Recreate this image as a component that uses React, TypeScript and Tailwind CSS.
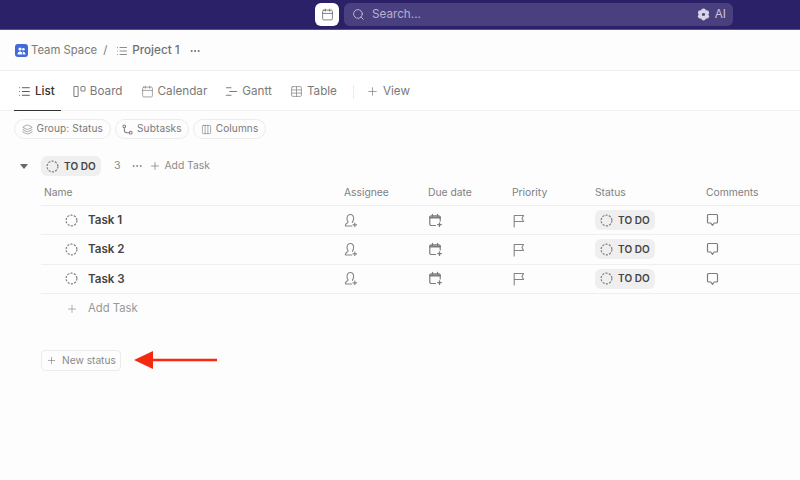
import { Columns3, Ellipsis, Layers, List, Plus, Search, Table, Calendar } from 'lucide-react';

const tasks = ['Task 1', 'Task 2', 'Task 3'];
const gridCols = 'grid grid-cols-[300px_84px_84px_83px_111px_1fr]';

function DashedCircle({ size = 13 }: { size?: number }) {
    return (
        <svg width={size} height={size} viewBox="0 0 14 14" fill="none" className="shrink-0">
            <circle cx="7" cy="7" r="5.8" stroke="#808080" strokeWidth="1.3" strokeDasharray="2.3 1.35" />
        </svg>
    );
}

function BoardIcon() {
    return (
        <svg width="13" height="13" viewBox="0 0 14 14" fill="none" stroke="#7d7d7d" strokeWidth="1.1" className="shrink-0">
            <rect x="1" y="1.5" width="4.5" height="11" rx="1" />
            <rect x="8.5" y="1.5" width="4.5" height="5" rx="1.5" />
        </svg>
    );
}

function GanttIcon() {
    return (
        <svg width="13" height="13" viewBox="0 0 14 14" fill="none" stroke="#7d7d7d" strokeWidth="1.2" strokeLinecap="round" className="shrink-0">
            <path d="M1.5 3h5M5 7h7.5M1.5 11h5" />
        </svg>
    );
}

function SubtasksIcon() {
    return (
        <svg width="11" height="11" viewBox="0 0 12 12" fill="none" stroke="#7d7d7d" strokeWidth="1.1" className="shrink-0">
            <circle cx="2.5" cy="2.5" r="1.5" />
            <circle cx="9.5" cy="9.5" r="1.5" />
            <path d="M2.5 4v2.5c0 2 1.2 3 3 3H8" />
        </svg>
    );
}

function AssigneeIcon() {
    return (
        <svg width="14" height="15" viewBox="0 0 14 15" fill="none" stroke="#858585" strokeWidth="1.1" strokeLinecap="round" strokeLinejoin="round" className="shrink-0">
            <path d="M7.7 13H2.2c-.6 0-1-.5-.8-1 .4-1.3 1.3-2 2.5-2.6.3-.2.3-.6.1-.8C3.3 7.9 3 7 3 5.6 3 3.3 4.4 1.5 6.3 1.5s3.300 1.8 3.300 4.1c0 1.4-.3 2.300-1 3-.2.2-.2.5 0 .7" />
            <path d="M10.8 10v3.600M9 11.800h3.600" strokeWidth="1.2" />
        </svg>
    );
}

function DueDateIcon() {
    return (
        <svg width="15" height="15" viewBox="0 0 15 15" fill="none" stroke="#7c7c7c" strokeLinecap="round" strokeLinejoin="round" className="shrink-0">
            <path d="M7.5 12.5H3.200c-.8 0-1.400-.6-1.400-1.400V4.300c0-.8.6-1.400 1.400-1.400h7.600c.8 0 1.400.6 1.400 1.400v3.700" strokeWidth="1.2" />
            <path d="M2 4.600h10" strokeWidth="2" />
            <path d="M4.500 1.300v2.200M9.500 1.300v2.200" strokeWidth="1.2" />
            <path d="M11.500 9.800v3.600M9.700 11.600h3.600" strokeWidth="1.3" />
        </svg>
    );
}

function FlagIcon() {
    return (
        <svg width="14" height="15" viewBox="0 0 14 15" fill="none" stroke="#858585" strokeWidth="1.1" strokeLinecap="round" strokeLinejoin="round" className="shrink-0">
            <path d="M2.200 14V2.500H11.500L10 5.500l1.500 3H2.200" />
        </svg>
    );
}

function CommentIcon() {
    return (
        <svg width="13" height="14" viewBox="0 0 13 14" fill="none" stroke="#7c7c7c" strokeWidth="1.2" strokeLinejoin="round" className="shrink-0">
            <path d="M2.500 1.500h8c.6 0 1 .4 1 1v6.500c0 .6-.4 1-1 1H8.200L6.500 12.300 4.800 10H2.500c-.6 0-1-.4-1-1V2.500c0-.6.4-1 1-1Z" />
        </svg>
    );
}

function Tab({ icon, label, active }: { icon: React.ReactNode; label: string; active?: boolean }) {
    return (
        <div className={`relative flex h-full items-center gap-1 pt-[2px] text-[11.7px] ${active ? 'font-medium text-[#333]' : 'text-[#7a7a7a]'}`}>
            {icon}
            <span>{label}</span>
            {active && <div className="absolute right-[-6px] bottom-[-1px] left-[-4px] h-[1.5px] bg-[#333]" />}
        </div>
    );
}

function Chip({ icon, label }: { icon: React.ReactNode; label: string }) {
    return (
        <div className="flex h-5 items-center gap-1 rounded-full border border-[#ececec] px-[6.5px] text-[10.1px] tracking-[0.1px] text-[#7a7a7a]">
            {icon}
            <span>{label}</span>
        </div>
    );
}

function StatusBadge() {
    return (
        <div className="flex h-5 w-[60px] items-center gap-[5px] rounded-md bg-[#efefef] px-[5px] text-[10px] font-semibold tracking-[0.1px] whitespace-nowrap text-[#444]">
            <DashedCircle />
            <span>TO DO</span>
        </div>
    );
}

export default function App() {
    return (
        <div className="flex h-[480px] w-[800px] flex-col overflow-hidden bg-[#fdfdfd] font-['Inter',sans-serif]">
            <header className="flex h-[30px] shrink-0 items-center border-b border-[#5a5290] bg-[#2b2169] pl-[315px]">
                <div className="flex h-[23px] w-[24px] items-center justify-center rounded-md bg-white">
                    <Calendar size={13} strokeWidth={1.5} color="#666" />
                </div>
                <div className="ml-[5px] flex h-[23px] w-[389px] items-center rounded-md bg-[#4a4080] pr-[7px] pl-[8px] text-[11.7px] text-[#b5b0d0]">
                    <Search size={13} strokeWidth={1.6} color="#c9c6dd" />
                    <span className="ml-[7px] flex-1">Search...</span>
                    <svg width="13" height="13" viewBox="0 0 14 14" fill="#d8d6e6" className="shrink-0">
                        <circle cx="7" cy="3.2" r="2.6" />
                        <circle cx="7" cy="10.8" r="2.6" />
                        <circle cx="3.6" cy="5" r="2.6" />
                        <circle cx="10.4" cy="5" r="2.6" />
                        <circle cx="3.6" cy="9" r="2.6" />
                        <circle cx="10.4" cy="9" r="2.6" />
                        <circle cx="7" cy="7" r="1.4" fill="#4a4080" />
                    </svg>
                    <span className="ml-[5px] text-[#c9c6dd]">AI</span>
                </div>
            </header>

            <div className="flex h-[41px] shrink-0 items-center border-b border-[#f1f1f1] pt-[1px] pl-[15px] text-[11.3px] text-[#7a7a7a]">
                <div className="flex h-[13px] w-[13px] items-center justify-center rounded-[3px] bg-[#4169d8]">
                    <svg width="9" height="8" viewBox="0 0 9 8" fill="white">
                        <circle cx="3" cy="2" r="1.6" />
                        <circle cx="6.4" cy="2.2" r="1.3" />
                        <path d="M0.5 7.5c0-2 1-3 2.5-3s2.5 1 2.500 3zM6.200 7.500c0-1.200-.2-2-.7-2.800 1.700-.3 3 .8 3 2.800z" />
                    </svg>
                </div>
                <span className="ml-[3px]">Team Space</span>
                <span className="ml-[6px]">/</span>
                <List size={12} strokeWidth={1.5} color="#666" className="ml-[9px]" />
                <span className="ml-1 text-[11.7px] font-medium text-[#6f6f6f]">Project 1</span>
                <Ellipsis size={12} color="#666" className="ml-[9px]" />
            </div>

            <div className="flex h-[40px] shrink-0 items-center gap-[18px] border-b border-[#f0f0f0] bg-white pl-[18px]">
                <Tab active label="List" icon={<List size={13} strokeWidth={1.6} color="#444" />} />
                <Tab label="Board" icon={<BoardIcon />} />
                <Tab label="Calendar" icon={<Calendar size={13} strokeWidth={1.3} color="#7d7d7d" />} />
                <Tab label="Gantt" icon={<GanttIcon />} />
                <Tab label="Table" icon={<Table size={13} strokeWidth={1.3} color="#7d7d7d" />} />
                <div className="-ml-[2px] mt-[2px] h-[14px] w-px bg-[#ececec]" />
                <div className="-ml-[6px] flex items-center gap-1 pt-[2px] text-[11.7px] text-[#7a7a7a]">
                    <Plus size={13} strokeWidth={1.3} color="#7d7d7d" />
                    <span>View</span>
                </div>
            </div>

            <div className="flex h-[36px] shrink-0 items-center gap-1 pl-[14px]">
                <Chip label="Group: Status" icon={<Layers size={11} strokeWidth={1.4} color="#7d7d7d" />} />
                <Chip label="Subtasks" icon={<SubtasksIcon />} />
                <Chip label="Columns" icon={<Columns3 size={11} strokeWidth={1.4} color="#7d7d7d" />} />
            </div>

            <div className="mt-[9px] flex h-5 shrink-0 items-center pl-[20px]">
                <svg width="8" height="5" viewBox="0 0 8 5" fill="#666" className="mr-[13px]">
                    <path d="M0 0h8L4 5z" />
                </svg>
                <StatusBadge />
                <span className="ml-[13px] text-[10.5px] text-[#888]">3</span>
                <Ellipsis size={12} color="#888" className="ml-[10px]" />
                <Plus size={12} strokeWidth={1.4} color="#777" className="ml-[6px]" />
                <span className="ml-[4px] text-[10.3px] text-[#8a8a8a]">Add Task</span>
            </div>

            <div className={`${gridCols} mt-[7px] ml-[41px] h-[23px] shrink-0 items-center border-b border-[#efefef] pb-[2px] pl-[3px] text-[10.3px] text-[#808080]`}>
                <span>Name</span>
                <span>Assignee</span>
                <span>Due date</span>
                <span>Priority</span>
                <span>Status</span>
                <span>Comments</span>
            </div>

            {tasks.map((task) => (
                <div key={task} className={`${gridCols} ml-[41px] h-[29.3px] shrink-0 items-center border-b border-[#efefef] pl-[3px]`}>
                    <div className="flex items-center gap-[10px] pl-[21px] text-[11.6px] font-semibold text-[#444]">
                        <DashedCircle />
                        <span className="pt-[1px]">{task}</span>
                    </div>
                    <AssigneeIcon />
                    <DueDateIcon />
                    <FlagIcon />
                    <StatusBadge />
                    <CommentIcon />
                </div>
            ))}

            <div className="ml-[41px] flex h-[29px] shrink-0 items-center gap-[10px] pt-[1px] pl-[25px] text-[11.3px] text-[#999]">
                <Plus size={12} strokeWidth={1.3} color="#888" />
                <span>Add Task</span>
            </div>

            <div className="mt-[27px] ml-[41px] flex items-center">
                <div className="flex h-[21px] w-[80px] items-center gap-[5px] rounded-[4px] border border-[#ececec] pl-[4px] text-[10.2px] text-[#8a8a8a]">
                    <Plus size={11} strokeWidth={1.3} color="#777" />
                    <span>New status</span>
                </div>
                <svg width="84" height="20" viewBox="0 0 84 20" className="ml-[13px]">
                    <path d="M0 10 19 1V8.8H83V11.2H19V19Z" fill="#f5290f" />
                </svg>
            </div>
        </div>
    );
}
